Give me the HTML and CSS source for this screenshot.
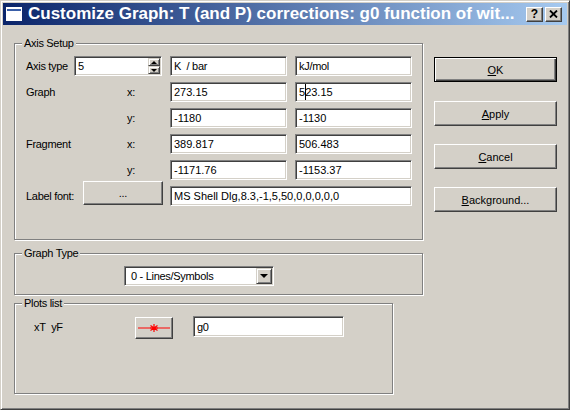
FILE: index.html
```html
<!DOCTYPE html>
<html>
<head>
<meta charset="utf-8">
<title>Customize Graph</title>
<link rel="stylesheet" href="styles.css">
</head>
<body>
<div class="window">
  <div class="titlebar">
    <span class="app-icon"><span class="app-icon-bar"></span></span>
    <span class="title">Customize Graph: T (and P) corrections: g0 function of wit...</span>
    <span class="cap-btn help">?</span>
    <span class="cap-btn close"><svg width="9" height="8" viewBox="0 0 9 8"><path d="M1 0.5 L8 7.5 M8 0.5 L1 7.5" stroke="#000" stroke-width="1.8" fill="none"/></svg></span>
  </div>
  <div class="client">
    <div class="left">
      <fieldset class="group axis">
        <legend>Axis Setup</legend>
        <div class="content axis-content">
          <div class="row">
            <span class="lbl w48">Axis type</span>
            <div class="edit spin">
              <span class="spin-text">5</span>
              <span class="spin-btns">
                <span class="sb"><span class="tri-up"></span></span>
                <span class="sb"><span class="tri-down"></span></span>
              </span>
            </div>
            <div class="edit half gap8">K&nbsp; / bar</div>
            <div class="edit half gap8">kJ/mol</div>
          </div>
          <div class="row">
            <span class="lbl w101">Graph</span>
            <span class="lbl w43">x:</span>
            <div class="edit half num">273.15</div>
            <div class="edit half gap8 num">5<span class="caret"></span>23.15</div>
          </div>
          <div class="row">
            <span class="lbl w101"></span>
            <span class="lbl w43">y:</span>
            <div class="edit half num">-1180</div>
            <div class="edit half gap8 num">-1130</div>
          </div>
          <div class="row">
            <span class="lbl w101">Fragment</span>
            <span class="lbl w43">x:</span>
            <div class="edit half num">389.817</div>
            <div class="edit half gap8 num">506.483</div>
          </div>
          <div class="row">
            <span class="lbl w101"></span>
            <span class="lbl w43">y:</span>
            <div class="edit half num">-1171.76</div>
            <div class="edit half gap8 num">-1153.37</div>
          </div>
          <div class="row">
            <span class="lbl w57">Label font:</span>
            <span class="btn font-btn">...</span>
            <div class="edit font-edit num">MS Shell Dlg,8.3,-1,5,50,0,0,0,0,0</div>
          </div>
        </div>
      </fieldset>

      <fieldset class="group gtype">
        <legend>Graph Type</legend>
        <div class="content gtype-content">
          <div class="combo">
            <span class="combo-text">0 - Lines/Symbols</span>
            <span class="combo-btn"><span class="tri-down big"></span></span>
          </div>
        </div>
      </fieldset>

      <fieldset class="group plots">
        <legend>Plots list</legend>
        <div class="content plots-content">
          <div class="plot-row">
            <span class="plot-lbl">xT&nbsp; yF</span>
            <span class="btn symbol-btn"><svg width="34" height="12" viewBox="0 0 34 12"><path d="M1 6 H33" stroke="#ff0000" stroke-width="1"/><path d="M17 2 V10 M13.5 3.5 L20.5 8.5 M20.5 3.5 L13.5 8.5 M13 6 H21" stroke="#ff0000" stroke-width="1.2"/></svg></span>
            <div class="edit plot-edit">g0</div>
          </div>
        </div>
      </fieldset>
    </div>

    <div class="buttons">
      <span class="btn dlg-btn default"><u>O</u>K</span>
      <span class="btn dlg-btn"><u>A</u>pply</span>
      <span class="btn dlg-btn"><u>C</u>ancel</span>
      <span class="btn dlg-btn"><u>B</u>ackground...</span>
    </div>
  </div>
</div>
</body>
</html>
```

FILE: styles.css
```css
* { box-sizing: border-box; }
html, body { margin: 0; padding: 0; }
body {
  width: 570px;
  height: 410px;
  overflow: hidden;
  background: #d4d0c8;
  font-family: "Liberation Sans", Arial, sans-serif;
  font-size: 11px;
  letter-spacing: -0.3px;
  color: #000;
}
.num { letter-spacing: 0; }
.window {
  width: 570px;
  height: 410px;
  border: 1px solid;
  border-color: #d4d0c8 #404040 #404040 #d4d0c8;
  box-shadow: inset 1px 1px 0 #fff, inset -1px -1px 0 #808080;
  padding: 2px;
  display: flex;
  flex-direction: column;
}
.titlebar {
  flex: none;
  height: 22px;
  background: linear-gradient(to right, #0a246a, #a6caf0);
  display: flex;
  align-items: center;
}
.app-icon {
  flex: none;
  width: 16px;
  height: 14px;
  margin-left: 3px;
  background: #fff;
  border: 1px solid #fff;
  display: flex;
  flex-direction: column;
}
.app-icon-bar {
  height: 2px;
  margin-top: 1px;
  background: #3a5fa8;
}
.title {
  flex: 1;
  margin-left: 6px;
  color: #fff;
  font-weight: bold;
  font-size: 17px;
  letter-spacing: 0;
  white-space: nowrap;
  overflow: hidden;
}
.cap-btn {
  flex: none;
  width: 17px;
  height: 15px;
  background: #d4d0c8;
  border: 1px solid;
  border-color: #fff #404040 #404040 #fff;
  box-shadow: inset -1px -1px 0 #808080;
  display: flex;
  align-items: center;
  justify-content: center;
  font-weight: bold;
  font-size: 12px;
  letter-spacing: 0;
  line-height: 1;
}
.help { margin-right: 2px; }
.close { margin-right: 5px; }

.client {
  flex: 1;
  display: flex;
  padding: 12px 0 0 11px;
}
.left {
  flex: none;
  width: 409px;
  display: flex;
  flex-direction: column;
}
.group {
  margin: 0;
  padding: 0;
  min-width: 0;
  border: 1px solid #808080;
  box-shadow: 1px 1px 0 #fff, inset 1px 1px 0 #fff;
}
.group legend {
  margin-left: 7px;
  padding: 0 2px;
  line-height: 13px;
  height: 13px;
  font-size: 11px;
  background: #d4d0c8;
}
.axis { width: 409px; }
.gtype { width: 409px; margin-top: 7px; }
.plots { width: 379px; margin-top: 2px; }

.axis-content { padding: 6px 0 33px 11px; }
.gtype-content { padding: 6px 0 8px 109px; }
.plots-content { padding: 6px 0 55px 19px; }

.row {
  display: flex;
  align-items: center;
  height: 20px;
  margin-bottom: 6px;
}
.row:last-child { margin-bottom: 0; }
.lbl { flex: none; white-space: nowrap; }
.w48 { width: 48px; }
.w101 { width: 101px; }
.w43 { width: 43px; }
.w57 { width: 57px; }

.edit {
  flex: none;
  height: 20px;
  background: #fff;
  border: 1px solid;
  border-color: #808080 #fff #fff #808080;
  box-shadow: inset 1px 1px 0 #404040, inset -1px -1px 0 #d4d0c8;
  padding: 0 3px;
  display: flex;
  align-items: center;
  white-space: nowrap;
  overflow: hidden;
}
.half { width: 117px; }
.gap8 { margin-left: 8px; }
.caret {
  display: inline-block;
  width: 1px;
  height: 16px;
  background: #000;
  margin: 0 -1px 0 0;
}

.spin {
  width: 88px;
  padding: 1px 1px 1px 3px;
}
.spin-text { flex: 1; }
.spin-btns {
  flex: none;
  width: 12px;
  height: 16px;
  display: flex;
  flex-direction: column;
}
.sb {
  height: 8px;
  background: #d4d0c8;
  border: 1px solid;
  border-color: #d4d0c8 #404040 #404040 #d4d0c8;
  box-shadow: inset 1px 1px 0 #fff, inset -1px -1px 0 #808080;
  display: flex;
  align-items: center;
  justify-content: center;
}
.tri-up {
  width: 0; height: 0;
  border-left: 3px solid transparent;
  border-right: 3px solid transparent;
  border-bottom: 3px solid #000;
}
.tri-down {
  width: 0; height: 0;
  border-left: 3px solid transparent;
  border-right: 3px solid transparent;
  border-top: 3px solid #000;
}
.tri-down.big {
  border-left-width: 4px;
  border-right-width: 4px;
  border-top-width: 4px;
}

.btn {
  flex: none;
  background: #d4d0c8;
  border: 1px solid;
  border-color: #fff #404040 #404040 #fff;
  box-shadow: inset -1px -1px 0 #808080;
  display: flex;
  align-items: center;
  justify-content: center;
  white-space: nowrap;
}
.font-btn {
  width: 80px;
  height: 24px;
  align-self: flex-start;
  margin-top: -5px;
}
.font-edit { width: 242px; margin-left: 7px; }

.combo {
  width: 150px;
  height: 20px;
  background: #fff;
  border: 1px solid;
  border-color: #808080 #fff #fff #808080;
  box-shadow: inset 1px 1px 0 #404040, inset -1px -1px 0 #d4d0c8;
  padding: 1px 1px 1px 6px;
  display: flex;
  align-items: center;
}
.combo-text { flex: 1; white-space: nowrap; }
.combo-btn {
  flex: none;
  width: 16px;
  height: 16px;
  background: #d4d0c8;
  border: 1px solid;
  border-color: #d4d0c8 #404040 #404040 #d4d0c8;
  box-shadow: inset 1px 1px 0 #fff, inset -1px -1px 0 #808080;
  display: flex;
  align-items: center;
  justify-content: center;
}

.plot-row {
  display: flex;
  align-items: flex-start;
  height: 22px;
}
.plot-lbl {
  flex: none;
  width: 101px;
  height: 21px;
  line-height: 21px;
  margin-top: 1px;
  white-space: nowrap;
}
.symbol-btn {
  width: 38px;
  height: 22px;
  margin-top: 1px;
}
.plot-edit {
  width: 151px;
  height: 21px;
  margin-left: 20px;
}

.buttons {
  flex: none;
  margin-left: 11px;
  padding-top: 20px;
  display: flex;
  flex-direction: column;
  gap: 18px;
}
.dlg-btn {
  width: 123px;
  height: 25px;
  letter-spacing: 0;
}
.dlg-btn.default {
  border-color: #000;
  box-shadow: inset 1px 1px 0 #fff, inset -1px -1px 0 #404040, inset -2px -2px 0 #808080;
  margin-bottom: 1px;
}
u { text-decoration: underline; text-underline-offset: 1px; }
```
